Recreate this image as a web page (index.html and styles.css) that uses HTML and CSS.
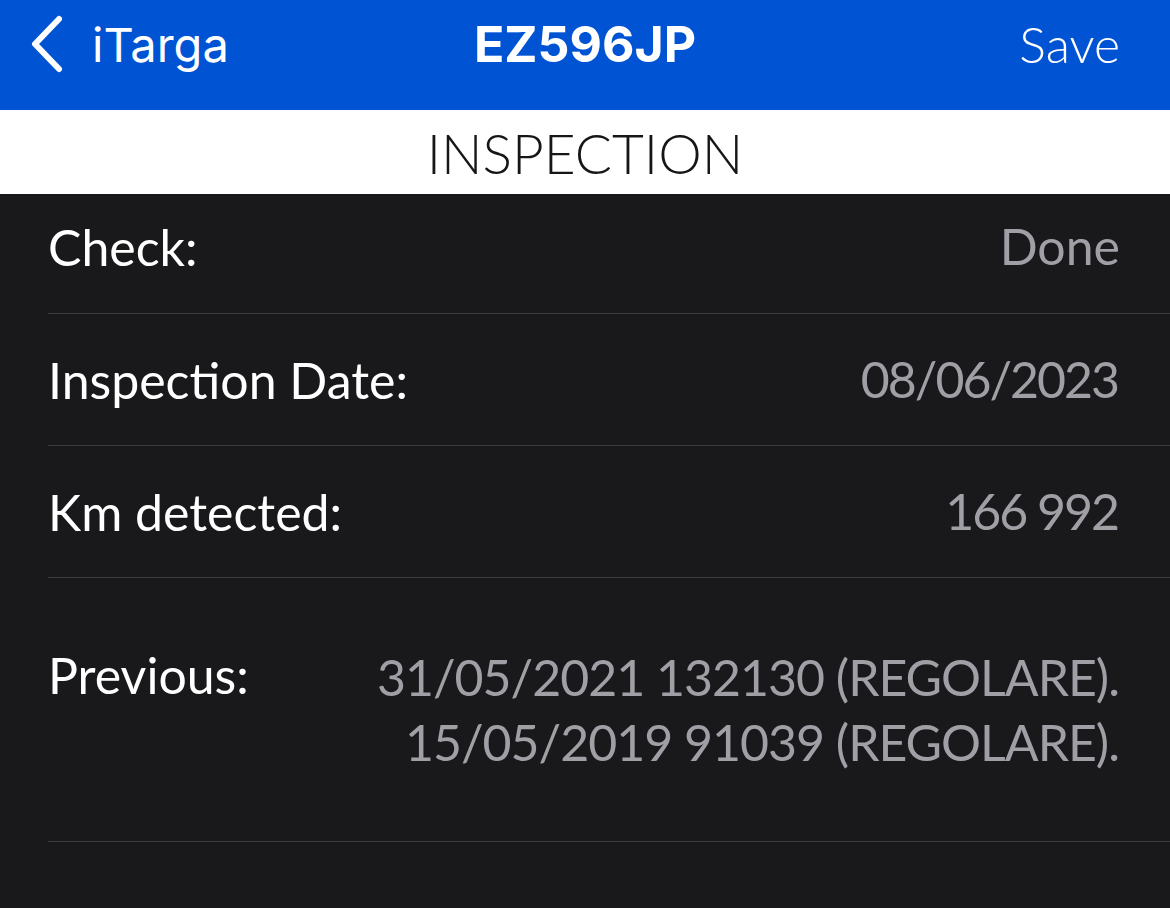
FILE: index.html
```html
<!DOCTYPE html>
<html lang="en">
<head>
  <meta charset="UTF-8" />
  <title>iTarga - EZ596JP</title>
  <link rel="stylesheet" href="styles.css">
</head>
<body>

  <div class="navbar">
    <a class="nav-back" href="#">
      <svg class="chevron" width="36" height="60" viewBox="0 0 36 60">
        <path d="M31 5 L7 30 L31 55" fill="none" stroke="#fff" stroke-width="6" stroke-linecap="round" stroke-linejoin="round"/>
      </svg>
      <span>iTarga</span>
    </a>
    <div class="nav-title">EZ596JP</div>
    <a class="nav-save" href="#">Save</a>
  </div>

  <div class="section-head">INSPECTION</div>

  <div class="list">
    <div class="row first">
      <span class="label">Check:</span>
      <span class="value">Done</span>
    </div>
    <div class="row">
      <span class="label">Inspection Date:</span>
      <span class="value num">08/06/2023</span>
    </div>
    <div class="row">
      <span class="label">Km detected:</span>
      <span class="value num">166 992</span>
    </div>
    <div class="row tall">
      <span class="label">Previous:</span>
      <span class="value history">31/05/2021 132130 (REGOLARE).<br>15/05/2019 91039 (REGOLARE).</span>
    </div>
  </div>

</body>
</html>
```

FILE: styles.css
```css
body {
  margin: 0;
  width: 1170px;
  height: 908px;
  overflow: hidden;
  background: #19191b;
  font-family: 'Lato', 'Open Sans', sans-serif;
}
.navbar {
  height: 110px;
  background: #0053d3;
  display: flex;
  align-items: center;
  justify-content: space-between;
  padding: 0 50px 22px 28px;
  box-sizing: border-box;
  position: relative;
}
.nav-back {
  display: flex;
  align-items: center;
  gap: 28px;
  color: #fff;
  text-decoration: none;
  font-family: 'Inter', sans-serif;
  font-size: 47px;
}
.chevron {
  display: block;
}
.nav-title {
  position: absolute;
  left: 0;
  right: 0;
  top: 14px;
  text-align: center;
  font-family: 'Inter', sans-serif;
  font-weight: 700;
  font-size: 50px;
  color: #fff;
  pointer-events: none;
}
.nav-save {
  color: #fff;
  text-decoration: none;
  font-size: 50px;
  font-weight: 300;
}
.section-head {
  height: 84px;
  background: #fff;
  color: #161616;
  font-size: 55px;
  font-weight: 300;
  display: flex;
  align-items: center;
  justify-content: center;
  padding-top: 2px;
  box-sizing: border-box;
}
.list {
  padding-left: 48px;
}
.row {
  height: 132px;
  display: flex;
  align-items: center;
  justify-content: space-between;
  padding-right: 50px;
  border-bottom: 1px solid #3b3b3e;
  box-sizing: border-box;
  font-size: 50px;
}
.row.first {
  height: 120px;
  padding-bottom: 14px;
}
.row.tall {
  height: 264px;
  align-items: flex-start;
  padding-top: 67px;
}
.label {
  color: #fff;
}
.value {
  color: #a09fa6;
  text-align: right;
  line-height: 65px;
}
.value.num {
  letter-spacing: -2px;
  margin-right: 2px;
}
.value.history {
  letter-spacing: -1px;
  margin-right: 1px;
}
```
